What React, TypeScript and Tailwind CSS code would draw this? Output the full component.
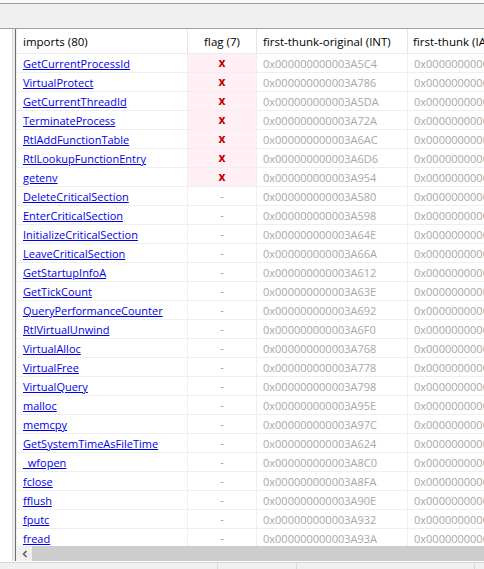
import React from "react";

type Row = { name: string; flagged: boolean; int: string };

const rows: Row[] = [
  { name: "GetCurrentProcessId", flagged: true, int: "3A5C4" },
  { name: "VirtualProtect", flagged: true, int: "3A786" },
  { name: "GetCurrentThreadId", flagged: true, int: "3A5DA" },
  { name: "TerminateProcess", flagged: true, int: "3A72A" },
  { name: "RtlAddFunctionTable", flagged: true, int: "3A6AC" },
  { name: "RtlLookupFunctionEntry", flagged: true, int: "3A6D6" },
  { name: "getenv", flagged: true, int: "3A954" },
  { name: "DeleteCriticalSection", flagged: false, int: "3A580" },
  { name: "EnterCriticalSection", flagged: false, int: "3A598" },
  { name: "InitializeCriticalSection", flagged: false, int: "3A64E" },
  { name: "LeaveCriticalSection", flagged: false, int: "3A66A" },
  { name: "GetStartupInfoA", flagged: false, int: "3A612" },
  { name: "GetTickCount", flagged: false, int: "3A63E" },
  { name: "QueryPerformanceCounter", flagged: false, int: "3A692" },
  { name: "RtlVirtualUnwind", flagged: false, int: "3A6F0" },
  { name: "VirtualAlloc", flagged: false, int: "3A768" },
  { name: "VirtualFree", flagged: false, int: "3A778" },
  { name: "VirtualQuery", flagged: false, int: "3A798" },
  { name: "malloc", flagged: false, int: "3A95E" },
  { name: "memcpy", flagged: false, int: "3A97C" },
  { name: "GetSystemTimeAsFileTime", flagged: false, int: "3A624" },
  { name: "_wfopen", flagged: false, int: "3A8C0" },
  { name: "fclose", flagged: false, int: "3A8FA" },
  { name: "fflush", flagged: false, int: "3A90E" },
  { name: "fputc", flagged: false, int: "3A932" },
  { name: "fread", flagged: false, int: "3A93A" },
];

const font = { fontFamily: '"Open Sans", "Noto Sans", sans-serif' };

function HeaderCell({ children, className }: { children: React.ReactNode; className: string }) {
  return (
    <div className={`flex h-[24px] shrink-0 items-center whitespace-nowrap border-r border-[#e5e5e5] pt-[1px] text-[11.5px] text-black ${className}`}>
      {children}
    </div>
  );
}

export default function App() {
  return (
    <div className="flex h-[569px] w-[484px] flex-col overflow-hidden bg-white" style={font}>
      {/* toolbar band */}
      <div className="h-[3px] shrink-0 bg-[#f9f9f9]" />
      <div className="h-[26px] shrink-0 border-y border-[#a0a0a0] bg-[#f0f0f0]" />

      <div className="flex min-h-0 flex-1">
        {/* left panel + splitter */}
        <div className="w-[13px] shrink-0 border-r border-[#d9d9d9] bg-white" />
        <div className="w-[2px] shrink-0 bg-[#f0f0f0]" />
        <div className="w-[1px] shrink-0 bg-[#6e6e6e]" />

        {/* table */}
        <div className="flex min-w-0 flex-1 flex-col overflow-hidden border-l border-[#f0f0f0]">
          <div className="flex min-h-0 flex-1 flex-col overflow-hidden">
            <div className="flex shrink-0 border-b border-[#ebebeb]">
              <HeaderCell className="w-[171px] pl-[6px]">imports (80)</HeaderCell>
              <HeaderCell className="w-[69px] justify-center">flag (7)</HeaderCell>
              <HeaderCell className="w-[151px] pl-[6px]">first-thunk-original (INT)</HeaderCell>
              <HeaderCell className="w-[160px] pl-[5px]">first-thunk (IAT)</HeaderCell>
            </div>
            {rows.map((r) => (
              <div key={r.name} className="flex h-[19px] shrink-0 border-b border-[#efefef] text-[11px] leading-[18px]">
                <div className="w-[171px] shrink-0 border-r border-[#efefef] pl-[6px] pt-[1px]">
                  <a href="#" className="text-[#0000ee] underline">
                    {r.name}
                  </a>
                </div>
                <div
                  className={`flex w-[69px] shrink-0 items-center justify-center border-r border-[#efefef] ${
                    r.flagged ? "bg-[#fff0f5] text-[12px] font-bold text-[#c00000]" : "text-[#999999]"
                  }`}
                >
                  {r.flagged ? "x" : "-"}
                </div>
                <div className="w-[151px] shrink-0 border-r border-[#efefef] pl-[6px] pt-[1px] text-[#a8a8a8]">
                  0x00000000000{r.int}
                </div>
                <div className="w-[160px] shrink-0 whitespace-nowrap pl-[6px] pt-[1px] text-[#a8a8a8]">
                  0x00000000000{r.int}
                </div>
              </div>
            ))}
          </div>
          {/* horizontal scrollbar */}
          <div className="flex h-[15px] shrink-0 bg-[#f0f0f0]">
            <div className="flex w-[15px] shrink-0 items-center justify-center">
              <svg width="8" height="8" viewBox="0 0 8 8">
                <path d="M5.5 1 L2.5 4 L5.5 7" fill="none" stroke="#606060" strokeWidth="1.6" />
              </svg>
            </div>
            <div className="flex-1 bg-[#cdcdcd]" />
          </div>
        </div>
      </div>

      {/* status bar */}
      <div className="h-[1px] shrink-0 bg-white" />
      <div className="flex h-[7px] shrink-0 border-t border-[#d7d7d7] bg-[#f0f0f0]">
        <div className="w-[218px] shrink-0 border-r border-[#d7d7d7]" />
        <div className="w-[79px] shrink-0 border-r border-[#d7d7d7]" />
        <div className="w-[178px] shrink-0 border-r border-[#d7d7d7]" />
      </div>
    </div>
  );
}
